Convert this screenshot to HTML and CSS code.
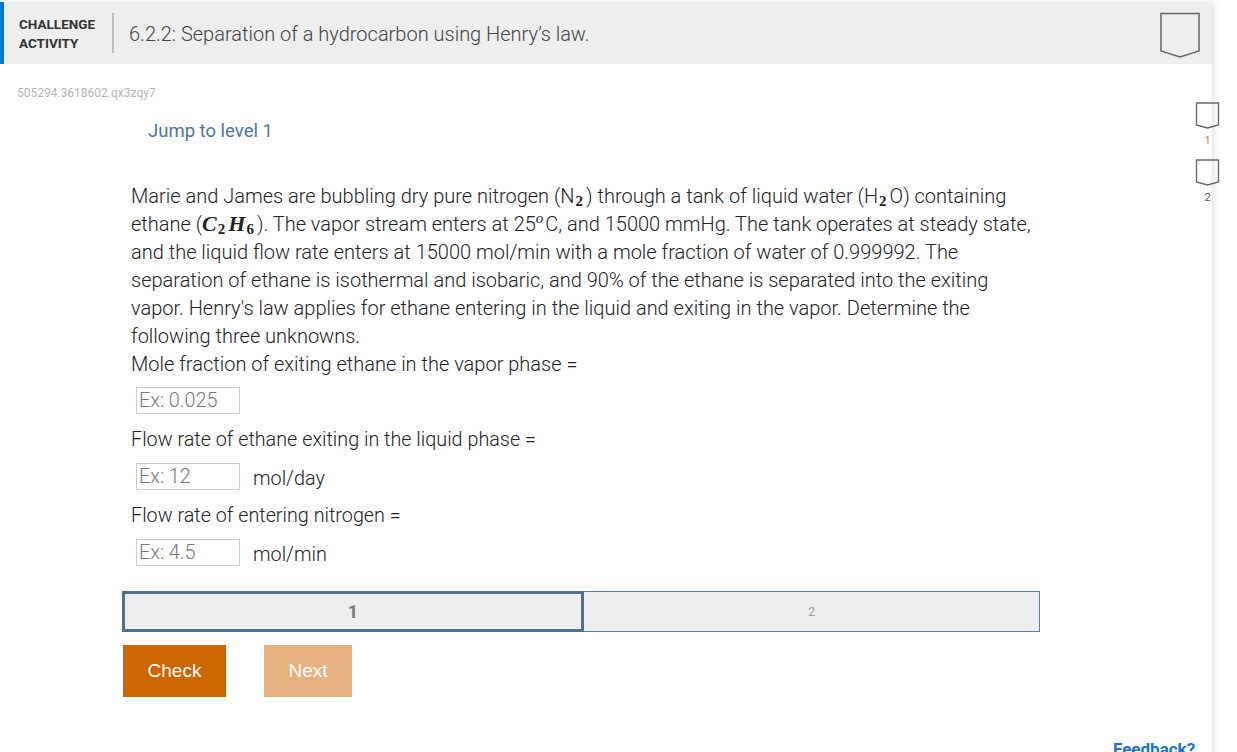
FILE: index.html
```html
<!DOCTYPE html>
<html lang="en">
  <head>
    <meta charset="UTF-8" />
    <title>6.2.2: Separation of a hydrocarbon using Henry's law.</title>
    <link rel="stylesheet" href="styles.css">
  </head>
  <body>
    <div class="card">
      <div class="activity-header">
        <div class="activity-type">CHALLENGE<br />ACTIVITY</div>
        <div class="activity-title">6.2.2: Separation of a hydrocarbon using Henry’s law.</div>
        <svg class="header-badge" width="42" height="47" viewBox="0 0 42 47">
          <path d="M2 1.5 H40 V39 L21 45 L2 39 Z" fill="none" stroke="#666" stroke-width="1.5" />
        </svg>
      </div>
      <div class="activity-body">
        <div class="activity-main">
          <div class="activity-id">505294.3618602.qx3zqy7</div>
          <div class="content">
            <div class="jump">Jump to level 1</div>
            <p class="prompt">
              Marie and James are bubbling dry pure nitrogen (N<sub class="m">2</sub>) through a tank of liquid water (H<sub class="m">2</sub>O) containing
              ethane (<span class="mi">C</span><sub class="m">2</sub><span class="mi">H</span><sub class="m">6</sub>). The vapor stream enters at 25<sup class="mi">o</sup>C, and 15000 mmHg. The tank operates at steady state,
              and the liquid flow rate enters at 15000 mol/min with a mole fraction of water of 0.999992. The
              separation of ethane is isothermal and isobaric, and 90% of the ethane is separated into the exiting
              vapor. Henry's law applies for ethane entering in the liquid and exiting in the vapor. Determine the
              following three unknowns.<br />
              Mole fraction of exiting ethane in the vapor phase =
            </p>
            <div class="answer"><input type="text" placeholder="Ex: 0.025" /></div>
            <p class="question">Flow rate of ethane exiting in the liquid phase =</p>
            <div class="answer"><input type="text" placeholder="Ex: 12" /><span class="unit">mol/day</span></div>
            <p class="question">Flow rate of entering nitrogen =</p>
            <div class="answer"><input type="text" placeholder="Ex: 4.5" /><span class="unit">mol/min</span></div>

            <div class="levels-bar">
              <div class="level level-current">1</div>
              <div class="level">2</div>
            </div>
            <div class="buttons">
              <button class="btn btn-check">Check</button>
              <button class="btn btn-next">Next</button>
            </div>
            <div class="feedback">Feedback?</div>
          </div>
        </div>
        <div class="level-list">
          <div class="level-item">
            <svg width="25" height="27" viewBox="0 0 25 27">
              <path d="M1.5 1 H23.5 V23 L12.5 26 L1.5 23 Z" fill="none" stroke="#666" stroke-width="1.3" />
            </svg>
            <span class="level-num level-num-active">1</span>
          </div>
          <div class="level-item">
            <svg width="25" height="27" viewBox="0 0 25 27">
              <path d="M1.5 1 H23.5 V23 L12.5 26 L1.5 23 Z" fill="none" stroke="#666" stroke-width="1.3" />
            </svg>
            <span class="level-num">2</span>
          </div>
        </div>
      </div>
    </div>
  </body>
</html>
```

FILE: styles.css
```css
body {
  margin: 0;
  font-family: Roboto, "Liberation Sans", sans-serif;
  background: #fff;
  overflow: hidden;
}

.card {
  width: 1212px;
  height: 760px;
  background: #fff;
  box-shadow: 2px 0 6px rgba(0, 0, 0, 0.12);
}

.activity-header {
  display: flex;
  align-items: center;
  height: 62px;
  margin-top: 2px;
  background: #eeeeee;
  border-left: 4px solid #0b7ac5;
}

.activity-type {
  width: 93px;
  padding: 2px 0 0 15px;
  font-size: 13.5px;
  font-weight: 700;
  line-height: 19px;
  color: #333;
}

.activity-title {
  flex: 1;
  height: 40px;
  line-height: 42px;
  padding-left: 15px;
  border-left: 2px solid #bdbdbd;
  font-size: 20px;
  font-weight: 300;
  color: #444;
}

.header-badge {
  margin-right: 11px;
  margin-top: 4px;
}

.activity-body {
  display: flex;
}

.activity-main {
  flex: 1;
}

.activity-id {
  padding: 22px 0 0 17px;
  font-size: 12px;
  color: #b5b5b5;
  line-height: 14px;
}

.content {
  padding-left: 131px;
}

.jump {
  margin: 21px 0 0 17px;
  font-size: 18.5px;
  line-height: 20px;
  color: #4f74a3;
}

.prompt {
  margin: 41px 0 0;
  width: 910px;
  font-size: 20px;
  font-weight: 300;
  line-height: 28px;
  color: #222;
}

.m {
  font-family: "Liberation Serif", serif;
  font-size: 15px;
  font-weight: 700;
  vertical-align: -3px;
  line-height: 0;
  padding: 0 3px 0 1px;
}

.mi {
  font-family: "Liberation Serif", serif;
  font-style: italic;
  font-weight: 700;
  font-size: 22px;
  line-height: 0;
}

sup.mi {
  font-size: 15px;
  font-weight: 400;
  vertical-align: 8px;
  padding-right: 2px;
}

.answer {
  display: flex;
  align-items: center;
  margin: 9px 0 0 5px;
  height: 27px;
}

.answer input {
  width: 104px;
  height: 27px;
  box-sizing: border-box;
  border: 1px solid #ccc;
  padding: 0 2px;
  font-family: Roboto, "Liberation Sans", sans-serif;
  font-size: 19.8px;
  font-weight: 300;
  color: #333;
}

.answer input::placeholder {
  color: #777;
}

.unit {
  margin: 0 0 0 13px;
  padding-top: 4px;
  font-size: 19.8px;
  font-weight: 300;
  color: #222;
}

.question {
  margin: 12px 0 0;
  font-size: 19.8px;
  font-weight: 300;
  line-height: 28px;
  color: #222;
}

.levels-bar {
  display: flex;
  width: 918px;
  margin: 25px 0 0 -9px;
}

.level {
  flex: 1;
  height: 41px;
  box-sizing: border-box;
  display: flex;
  align-items: center;
  justify-content: center;
  background: #eeeeee;
  border: 1px solid #5b7ea8;
  border-left: none;
  font-size: 12px;
  color: #999;
}

.level-current {
  flex: 0 0 462px;
  border: 3px solid #546e90;
  font-size: 18px;
  font-weight: 700;
  color: #777;
}

.buttons {
  display: flex;
  gap: 38px;
  margin: 13px 0 0 -8px;
}

.btn {
  height: 52px;
  border: none;
  font-family: "Liberation Sans", Arial, sans-serif;
  font-size: 19px;
  color: #fff;
  padding: 0;
}

.btn-check {
  width: 103px;
  background: #cc6600;
}

.btn-next {
  width: 88px;
  background: #e6b07f;
}

.feedback {
  margin: 42px 0 0 982px;
  font-size: 17px;
  font-weight: 700;
  color: #1a73c8;
}

.level-list {
  width: 52px;
  padding: 38px 0 0 0;
  margin-right: 7px;
}

.level-item {
  display: flex;
  flex-direction: column;
  align-items: center;
  margin-bottom: 12px;
}

.level-num {
  margin-top: 5px;
  font-size: 11px;
  color: #555;
}

.level-num-active {
  color: #e0744f;
}
```
